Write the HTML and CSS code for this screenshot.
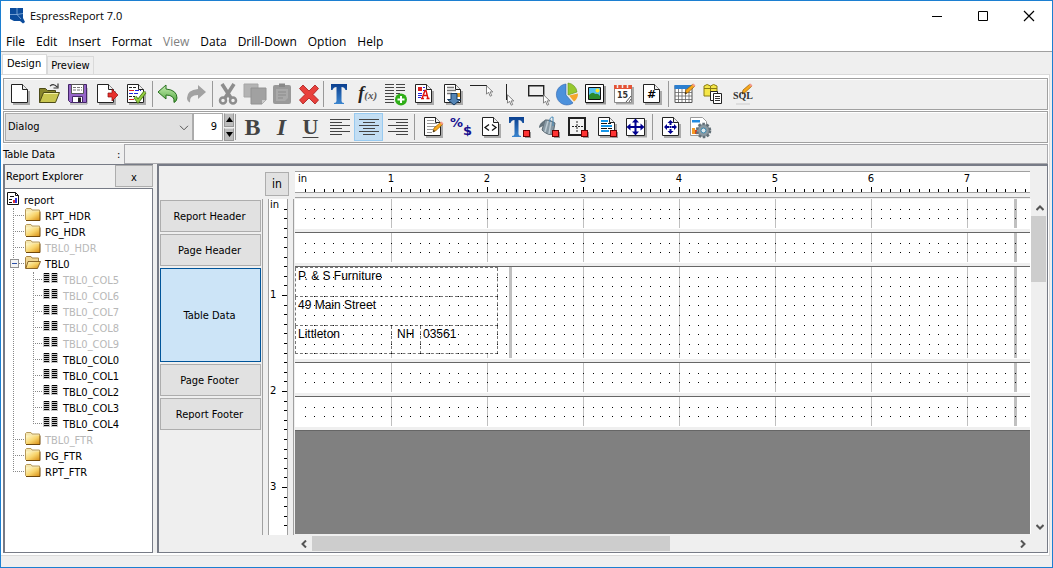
FILE: index.html
```html
<!DOCTYPE html>
<html lang="en">
<head>
<meta charset="utf-8">
<title>EspressReport 7.0</title>
<link rel="stylesheet" href="styles.css">
</head>
<body>
<svg class="defs" width="0" height="0" aria-hidden="true">
  <defs>
    <pattern id="dots" x="1" y="1" width="96" height="96" patternUnits="userSpaceOnUse">
      <g id="dot-rows" stroke="#000" stroke-width="1">
        <g id="dot-row"><path d="M9 9.500h1m8 0h1m9 0h1m8 0h1m9 0h1m9 0h1m8 0h1m9 0h1m8 0h1m9 0h1"/></g>
        <use href="#dot-row" y="9"/><use href="#dot-row" y="19"/><use href="#dot-row" y="28"/><use href="#dot-row" y="38"/><use href="#dot-row" y="48"/><use href="#dot-row" y="57"/><use href="#dot-row" y="67"/><use href="#dot-row" y="76"/>
      </g>
    </pattern>
    <pattern id="lines" x="1" width="96" height="96" patternUnits="userSpaceOnUse"><rect x="95" width="1" height="96" fill="#c0c0c0"/></pattern>
    <pattern id="hticks" x="1" width="96" height="20" patternUnits="userSpaceOnUse"><path d="M9.500 17v3m9-3v3m10-3v3m9-3v3m10-3v3m10-3v3m9-3v3m10-3v3m9-3v3m10-5v5" stroke="#000"/></pattern>
    <pattern id="vticks" y="1" width="20" height="96" patternUnits="userSpaceOnUse"><path d="M17 9.500h3m-3 9h3m-3 10h3m-3 9h3m-3 10h3m-3 10h3m-3 9h3m-3 10h3m-3 9h3m-5 10h5" stroke="#000"/></pattern>
    <linearGradient id="gold" x1="0" y1="0" x2="1" y2="1"><stop offset="0" stop-color="#fffbd0"/><stop offset=".5" stop-color="#f8d46c"/><stop offset="1" stop-color="#d58a10"/></linearGradient>
    <linearGradient id="blue" x2="0" y2="1"><stop offset="0" stop-color="#0a3f8f"/><stop offset="1" stop-color="#3c86cf"/></linearGradient>
    <linearGradient id="green" x2="0" y2="1"><stop offset="0" stop-color="#c9efb4"/><stop offset="1" stop-color="#4da63b"/></linearGradient>
    <symbol id="page" viewBox="0 0 24 24"><path d="M5 22h16V9" fill="none" stroke="#aaa" stroke-width="2"/><path d="M3.500 2.500h11l5 5v13h-16z" fill="#fff" stroke="#222"/><path d="M14.500 2.500v5h5" fill="#eee" stroke="#222"/></symbol>
    <symbol id="cursor" viewBox="0 0 9 12"><path d="M1.500.8v8.400l2-2 1.700 4 1.500-.7-1.600-3.600h2.700z" fill="#fff" stroke="#666" stroke-width=".8"/></symbol>
    <symbol id="red" viewBox="0 0 8 8"><rect x="2" y="2" width="6" height="6" fill="#999"/><rect x=".5" y=".5" width="6" height="6" fill="#f33" stroke="#600"/></symbol>
    <symbol id="pencil" viewBox="0 0 12 12"><path d="M1 11l1-4 7-6 2 2-7 6.500z" fill="#f7a81c" stroke="#985d00" stroke-width=".7"/><path d="M8 1.700l1.500-1.200 2 2L10 4z" fill="#f39a8c"/><path d="M1 11l.6-2.200 1.500 1.500z" fill="#222"/></symbol>
    <symbol id="folder" viewBox="0 0 16 14"><path d="M.5 11.500v-10l1-1h4.500l1 1.500h7.500v9.500z" fill="#f5e6ae" stroke="#b79a5b"/><path d="M1 3.500h14v9H1z" fill="url(#gold)"/><path d="M1 12.500h14v-9" fill="none" stroke="#70480c"/></symbol>
    <symbol id="folder-open" viewBox="0 0 16 14"><path d="M.5 12.500v-11l1-1h4.500l1 1.500h6.500v4" fill="#f0d690" stroke="#a78445"/><path d="M3 5.500h12.500l-3 7H.8z" fill="url(#gold)" stroke="#70480c" stroke-width=".8"/></symbol>
    <symbol id="column" viewBox="0 0 15 12"><path d="M0 1h7v10H0zM8 1h7v10H8z" fill="#c4c4c4"/><path d="M1 1.500h5m3 0h5M1 3.500h5m3 0h5M1 5.500h5m3 0h5M1 7.500h5m3 0h5M1 9.500h5m3 0h5" stroke="#000"/></symbol>
  </defs>
</svg>

<div class="window">
  <header class="titlebar">
    <svg class="logo" viewBox="0 0 16 16" width="16" height="16" aria-hidden="true"><path d="M1 0h13v10l2 4-2 1.500-3-2.500H5l-4-2z" fill="#0b4c9c"/><path d="M1 6.500h7V0m0 6.500l4 4.500m-4-4.500l6-1" fill="none" stroke="#8db4df" stroke-width=".8"/></svg>
    <h1 class="title">EspressReport 7.0</h1>
    <div class="window-controls">
      <button aria-label="Minimize"><svg width="12" height="12"><path d="M1 6.500h10" stroke="#000"/></svg></button>
      <button aria-label="Maximize"><svg width="12" height="12"><path d="M1.500 1.500h9v9h-9z" fill="none" stroke="#000"/></svg></button>
      <button aria-label="Close"><svg width="12" height="12"><path d="M1 1l10 10m0-10L1 11" stroke="#000" stroke-width="1.200"/></svg></button>
    </div>
  </header>
  <nav class="menubar" aria-label="Main">
    <button>File</button><button>Edit</button><button>Insert</button><button>Format</button><button disabled>View</button><button>Data</button><button>Drill-Down</button><button>Option</button><button>Help</button>
  </nav>
  <div class="tabs" role="tablist">
    <button class="tab tab-active" role="tab" aria-selected="true">Design</button>
    <button class="tab" role="tab" aria-selected="false">Preview</button>
  </div>

  <main class="pane">
    <div class="toolbar" role="toolbar" aria-label="Standard">
      <div class="group g-file">
        <button aria-label="New"><svg viewBox="0 0 24 24"><use href="#page" x="-1" width="24" height="24"/></svg></button>
        <button aria-label="Open"><svg viewBox="0 0 24 24"><path d="M1.500 20.500v-14h6l2 2h8v4" fill="#87852a" stroke="#4d4b18"/><path d="M1.500 20.500l4-10h16l-4 10z" fill="#c9c64f" stroke="#4d4b18"/><path d="M6 11.500h14" stroke="#f2f0a2"/><path d="M12 4q4-3 7 1m1-3.500v4.500h-4.500" fill="none" stroke="#333" stroke-width="1.200"/></svg></button>
        <button aria-label="Save"><svg viewBox="0 0 24 24"><path d="M3 22h17V6" fill="none" stroke="#999"/><path d="M1.500 2.500h18v18h-16l-2-2z" fill="#9666c8" stroke="#432567"/><path d="M4.500 2.500h12v9h-12z" fill="#fff" stroke="#555"/><path d="M6 5.500h9M6 8h9" stroke="#777" stroke-dasharray="3 1"/><path d="M5.500 14.500h10v6h-10z" fill="#fff" stroke="#432567"/><path d="M11 15.500h3V20h-3z" fill="#222"/></svg></button>
        <button aria-label="Export"><svg viewBox="0 0 24 24"><use href="#page" x="-2" width="24" height="24"/><path d="M12 11h4V7l6 6-6 6v-4h-4z" fill="#e8302c" stroke="#8a1010" stroke-width=".7"/></svg></button>
        <button aria-label="Validate"><svg viewBox="0 0 24 24"><use href="#page" x="-1" width="24" height="24"/><path d="M4 5.500h8m-8 9h6" stroke="#222" stroke-dasharray="3 1"/><path d="M4 8.500h5m-5 9h5" stroke="#d22"/><path d="M10 8.500h6M4 11.500h9" stroke="#22d" stroke-dasharray="4 1"/><path d="M10 15l3 4 7-9" fill="none" stroke="#4d7d15" stroke-width="3.600"/><path d="M10 15l3 4 7-9" fill="none" stroke="#96ce45" stroke-width="2"/></svg></button>
      </div><span class="sep"></span>
      <div class="group g-undo">
        <button aria-label="Undo"><svg viewBox="0 0 24 24"><path d="M2 10l8-7v4q11 1 11 9 0 3-3 4.500 1-7.500-8-7.500v4z" fill="url(#green)" stroke="#28701f"/></svg></button>
        <button disabled aria-label="Redo"><svg viewBox="0 0 24 24"><path d="M21 10l-8-7v4Q2 8 2 16q0 3 3 4.500Q4 13 13 13v4z" fill="#a2a2a2"/></svg></button>
      </div><span class="sep"></span>
      <div class="group g-edit">
        <button disabled aria-label="Cut"><svg viewBox="0 0 24 24"><path d="M6 2l9 14M18 2L9 16" stroke="#8d8d8d" stroke-width="3.600"/><circle cx="7" cy="18.500" r="3" fill="none" stroke="#8d8d8d" stroke-width="2.500"/><circle cx="17" cy="18.500" r="3" fill="none" stroke="#8d8d8d" stroke-width="2.500"/></svg></button>
        <button disabled aria-label="Copy"><svg viewBox="0 0 24 24"><path d="M1 2h14v13H1z" fill="#b3b3b3" stroke="#a6a6a6"/><path d="M8 6h15v12l-4 4H8z" fill="#a1a1a1" stroke="#929292"/><path d="M19 22v-4h4" fill="#ccc"/></svg></button>
        <button disabled aria-label="Paste"><svg viewBox="0 0 24 24"><rect x="3" y="3" width="18" height="19" rx="2" fill="#999"/><path d="M9 1.500h6V5H9z" fill="#888"/><path d="M6 7h12v9l-3 3H6z" fill="#a9a9a9"/><path d="M8 10h8m-8 3h8m-8 3h5" stroke="#8b8b8b"/></svg></button>
        <button aria-label="Delete"><svg viewBox="0 0 24 24"><path d="M6 3l6 6 6-6 3.500 3.500L16 12.500l5.500 5.500-3.500 4-6-6-6 6-3.500-4 5.500-5.500-5.500-6z" fill="#e8403c" stroke="#a71b19" stroke-width=".8"/></svg></button>
      </div><span class="sep"></span>
      <div class="group g-insert">
        <button aria-label="Insert label"><svg viewBox="0 0 24 24"><path d="M4 2h16v6h-1.500q-1-3-4-3v14q0 2 2.500 2v1H7v-1q2.500 0 2.500-2V5q-3 0-4 3H4z" fill="url(#blue)"/></svg></button>
        <button aria-label="Insert formula"><span class="fx">f<small>(x)</small></span></button>
        <button aria-label="Insert column field"><svg viewBox="0 0 24 24"><path d="M1 2.500h9m2 0h9M1 5.500h9m2 0h9M1 8.500h9m2 0h9M1 11.500h9m2 0h4M1 14.500h9M1 17.500h9M1 20.500h9" stroke="#444"/><circle cx="17" cy="17.500" r="6" fill="#2fae18"/><path d="M17 14v7m-3.500-3.500h7" stroke="#fff" stroke-width="2"/></svg></button>
        <button aria-label="Insert rich text"><svg viewBox="0 0 24 24"><use href="#page" width="24" height="24" x="-1"/><path d="M5 5h4v4H5z" fill="#d22"/><path d="M10 5.500h2M10 8.500h2M5 11.500h4m-4 2h4m-4 2h3" stroke="#22d"/><path d="M9 16.500l3-8h1l2 8m-5-3h4M8 16.500h3m2.500 0h3" fill="none" stroke="#d11" stroke-width="1.400"/></svg></button>
        <button aria-label="Insert subreport"><svg viewBox="0 0 24 24"><use href="#page" width="24" height="24"/><path d="M6 5.500h7M6 8.500h9M6 11.500h5" stroke="#777" stroke-width="1.500"/><path d="M16 11h3v4h-3z" fill="#e8a024"/><path d="M10 11.500h6v6h3.500L13 23l-6.500-5.500H10z" fill="#5585b5" stroke="#163a61"/></svg></button>
        <button aria-label="Line"><svg viewBox="0 0 24 24"><path d="M0 3.500h17" stroke="#222"/><use href="#cursor" x="15" y="3" width="9" height="12"/></svg></button>
        <button aria-label="Vertical line"><svg viewBox="0 0 24 24"><path d="M8.500 2v16" stroke="#222"/><use href="#cursor" x="8" y="12" width="9" height="12"/></svg></button>
        <button aria-label="Rectangle"><svg viewBox="0 0 24 24"><path d="M1.700 3.700h15v10h-15z" fill="none" stroke="#222" stroke-width="1.400"/><use href="#cursor" x="15" y="12" width="9" height="12"/></svg></button>
        <button aria-label="Chart"><svg viewBox="0 0 24 24"><path d="M11 3v10l7 8A10.500 10.500 0 1 1 11 2z" fill="#4c91dc" stroke="#2b62ad" stroke-width=".6"/><path d="M13 1a10 10 0 0 1 9 9l-9 3z" fill="#96c82e" stroke="#5f901a" stroke-width=".6"/><path d="M14 13.500l9-2q0 5-4 8z" fill="#f5a62c"/></svg></button>
        <button aria-label="Image"><svg viewBox="0 0 24 24"><path d="M2 21.500h19V4" fill="none" stroke="#999" stroke-width="2"/><path d="M1.500 2.500h18v18h-18z" fill="#fff" stroke="#111"/><path d="M4.500 5.500h12v12h-12z" fill="#57c4f3" stroke="#111"/><path d="M5 13q4-4 6-1 3-1 5 2v3H5z" fill="#2b8c2e"/><circle cx="13.500" cy="8.500" r="2" fill="#ffea28"/></svg></button>
        <button aria-label="Date"><svg viewBox="0 0 24 24"><path d="M4 21.500h17V5" fill="none" stroke="#aaa" stroke-width="2"/><path d="M2.500 3.500h17v17h-17z" fill="#fff" stroke="#888"/><path d="M2 3h18v4H2z" fill="#e45336"/><path d="M5.500 1v5m5-5v5m5-5v5" stroke="#eee" stroke-width="1.500"/><text class="i-date" x="5" y="16">15</text><path d="M19 14l-5 6m5-3l-2 3" stroke="#555"/></svg></button>
        <button aria-label="Page number"><svg viewBox="0 0 24 24"><use href="#page" width="24" height="24" x="-1"/><text class="i-hash" x="6" y="16">#</text></svg></button>
      </div><span class="sep"></span>
      <div class="group g-data">
        <button aria-label="Edit query result"><svg viewBox="0 0 24 24"><path d="M2 3.500h17v17H2z" fill="#fff" stroke="#555"/><path d="M1.500 3h18v4h-18z" fill="#2b7fd0"/><path d="M2 10.500h17m-17 3.500h17m-17 3.500h17M5.500 7v13M9 7v13m3.500-13v13M16 7v13" stroke="#666" stroke-width=".8"/><use href="#pencil" x="11" y="1" width="12" height="12"/></svg></button>
        <button aria-label="Data source"><svg viewBox="0 0 24 24"><path d="M2 4q3-3 6.500 0 3-3 6.500 0v10H2z" fill="#f5e648" stroke="#8a7c13"/><path d="M8.500 4v10M2 6.500h13" stroke="#8a7c13"/><path d="M8.500 9.500h7v9h-7z" fill="#fff" stroke="#222"/><path d="M11.500 11.500h8v10h-8z" fill="#fff" stroke="#222"/><path d="M13 14.500h5m-5 2h5m-5 2h5" stroke="#333"/></svg></button>
        <button aria-label="SQL"><svg viewBox="0 0 24 24"><text class="i-sql" x="2" y="17">SQL</text><use href="#pencil" x="10" y="1" width="12" height="12"/><path d="M5 22h14" stroke="#ddd" stroke-width="2"/></svg></button>
      </div>
    </div>

    <div class="toolbar" role="toolbar" aria-label="Formatting">
      <div class="combo">
        <select aria-label="Font"><option>Dialog</option></select>
        <svg width="10" height="6" aria-hidden="true"><path d="M1 .8l4 4 4-4" fill="none" stroke="#555"/></svg>
      </div>
      <div class="spinner">
        <input type="text" value="9" aria-label="Font size">
        <div class="spin-buttons"><button aria-label="Increase size"><svg width="7" height="5"><path d="M3.500 0L7 5H0z"/></svg></button><button aria-label="Decrease size"><svg width="7" height="5"><path d="M0 0h7L3.500 5z"/></svg></button></div>
      </div>
      <span class="sep sep-first"></span>
      <div class="group wide">
        <button class="letter bold" aria-label="Bold">B</button>
        <button class="letter italic" aria-label="Italic">I</button>
        <button class="letter underline" aria-label="Underline">U</button>
        <button aria-label="Align left"><svg viewBox="0 0 24 24"><path d="M2 4.500h20M2 7.500h12M2 10.500h20M2 13.500h12M2 16.500h20M2 19.500h12" stroke="#444"/></svg></button>
        <button class="pressed" aria-label="Align center" aria-pressed="true"><svg viewBox="0 0 24 24"><path d="M2 4.500h20M6 7.500h12M2 10.500h20M6 13.500h12M2 16.500h20M6 19.500h12" stroke="#444"/></svg></button>
        <button aria-label="Align right"><svg viewBox="0 0 24 24"><path d="M2 4.500h20M10 7.500h12M2 10.500h20M10 13.500h12M2 16.500h20M10 19.500h12" stroke="#444"/></svg></button>
      </div><span class="sep sep-wide"></span>
      <div class="group wide">
        <button aria-label="Script"><svg viewBox="0 0 24 24"><use href="#page" width="24" height="24"/><path d="M6 5.500h7M6 8.500h10M6 11.500h9M6 14.500h6M6 17.500h5" stroke="#999"/><use href="#pencil" x="11" y="6" width="12" height="12"/></svg></button>
        <button aria-label="Data format"><svg viewBox="0 0 24 24"><text class="i-num" x="0" y="12">%</text><text class="i-num" x="13" y="20">$</text></svg></button>
        <button aria-label="HTML tag"><svg viewBox="0 0 24 24"><use href="#page" width="24" height="24"/><path d="M10 9.500l-4 3 4 3m3-6l4 3-4 3" fill="none" stroke="#111" stroke-width="1.300"/></svg></button>
        <button aria-label="Font color"><svg viewBox="0 0 24 24"><path d="M1 2h15v6h-1.500q-1-3-4-3v14q0 2 2.500 2v1H4v-1q2.500 0 2.500-2V5q-3 0-4 3H1z" fill="url(#blue)"/><use href="#red" x="15" y="15" width="8" height="8"/></svg></button>
        <button aria-label="Background color"><svg viewBox="0 0 24 24"><path d="M8 5q4-1 10 3l-2 11q-5 2-11-4z" fill="#8798a3" stroke="#5a6872"/><path d="M11 6L8 17m6-10l-2 12" stroke="#bccad2" stroke-width="1.500"/><path d="M8 5Q2 8 2 13l4-2z" fill="#65737c"/><path d="M13 7q-1-5 3-5v9" fill="none" stroke="#4387b5"/><use href="#red" x="15" y="15" width="8" height="8"/></svg></button>
        <button aria-label="Border"><svg viewBox="0 0 24 24"><path d="M3 3h16v17H3z" fill="#f4f4f4" stroke="#222" stroke-width="2"/><path d="M11 6v11M6 11.500h11" stroke="#222" stroke-dasharray="2 1"/><use href="#red" x="15" y="15" width="8" height="8"/></svg></button>
        <button aria-label="Alternate row color"><svg viewBox="0 0 24 24"><use href="#page" width="24" height="24"/><path d="M6 6h7m-7 5h11m-11 5h8" stroke="#1595e8" stroke-width="2"/><path d="M6 8.500h10m-10 5h11" stroke="#111" stroke-dasharray="6 1 4 1"/><use href="#red" x="15" y="15" width="8" height="8"/></svg></button>
        <button aria-label="Size"><svg viewBox="0 0 24 24"><path d="M4 21.500h18V5" fill="none" stroke="#aaa" stroke-width="2"/><path d="M2.500 3.500h18v17h-18z" fill="#fff" stroke="#222"/><path d="M11.500 3.500l3.500 4h-2.500v3.500h4V8.500l4 3.500-4 3.500V13h-4v3.500H15l-3.500 4-3.500-4h2.500V13h-4v2.500l-4-3.500 4-3.500V11h4V7.500H8z" fill="#00008f"/></svg></button>
      </div><span class="sep sep-wide"></span>
      <div class="group wide">
        <button aria-label="Page setup"><svg viewBox="0 0 24 24"><use href="#page" width="24" height="24"/><path d="M11.500 5l3 3h-2v2h-2V8h-2zm0 14l3-3h-2v-2h-2v2h-2zM5 12l3-3v2h2v2H8v2zm13 0l-3-3v2h-2v2h2v2zM10.500 11h2v2h-2z" fill="#00008f"/></svg></button>
        <button aria-label="Report options"><svg viewBox="0 0 24 24"><path d="M2.500 2.500h12l4 4v14h-16z" fill="#fff" stroke="#999"/><path d="M4 5h8v2.500H4z" fill="#238be0"/><path d="M4 13h3v6H4z" fill="#f59b22"/><path d="M7 15h2v4H7z" fill="#d44424"/><circle cx="15.500" cy="15.500" r="6.500" fill="#86959e" stroke="#637078" stroke-width="2.600" stroke-dasharray="2.500 1.600"/><circle cx="15.500" cy="15.500" r="5" fill="#8c9aa2"/><circle cx="15.500" cy="15.500" r="2.500" fill="#dce8ee" stroke="#3786ad"/></svg></button>
      </div>
    </div>

    <div class="infobar"><label for="cell-value">Table Data</label><span>:</span><input id="cell-value" type="text" readonly></div>

    <div class="workspace">
      <aside class="explorer">
        <div class="explorer-head"><h2>Report Explorer</h2><button aria-label="Close explorer">x</button></div>
        <div class="tree">
          <div class="node root"><svg viewBox="0 0 13 14" aria-hidden="true"><path d="M.5.5h8l3 3v9H.5z" fill="#fff" stroke="#111"/><path d="M8.500.5v3h3M3 4.500h4M2 7.500h3M2 10.500h3" fill="none" stroke="#111"/><path d="M6 8h2v3H6z" fill="#d33"/><path d="M8 6h2v5H8z" fill="#33d"/></svg>report</div>
          <ul class="branch">
            <li><div class="node"><svg><use href="#folder"/></svg>RPT_HDR</div></li>
            <li><div class="node"><svg><use href="#folder"/></svg>PG_HDR</div></li>
            <li><div class="node off"><svg><use href="#folder"/></svg>TBL0_HDR</div></li>
            <li>
              <div class="node"><button class="expander" aria-label="Collapse TBL0"><svg width="9" height="9"><rect x=".5" y=".5" width="8" height="8" fill="#f4f4f4" stroke="#919191"/><path d="M2 4.500h5" stroke="#2b50a8"/></svg></button><svg><use href="#folder-open"/></svg>TBL0</div>
              <ul class="branch leaf">
                <li><div class="node off"><svg><use href="#column"/></svg>TBL0_COL5</div></li>
                <li><div class="node off"><svg><use href="#column"/></svg>TBL0_COL6</div></li>
                <li><div class="node off"><svg><use href="#column"/></svg>TBL0_COL7</div></li>
                <li><div class="node off"><svg><use href="#column"/></svg>TBL0_COL8</div></li>
                <li><div class="node off"><svg><use href="#column"/></svg>TBL0_COL9</div></li>
                <li><div class="node"><svg><use href="#column"/></svg>TBL0_COL0</div></li>
                <li><div class="node"><svg><use href="#column"/></svg>TBL0_COL1</div></li>
                <li><div class="node"><svg><use href="#column"/></svg>TBL0_COL2</div></li>
                <li><div class="node"><svg><use href="#column"/></svg>TBL0_COL3</div></li>
                <li><div class="node"><svg><use href="#column"/></svg>TBL0_COL4</div></li>
              </ul>
            </li>
            <li><div class="node off"><svg><use href="#folder"/></svg>TBL0_FTR</div></li>
            <li><div class="node"><svg><use href="#folder"/></svg>PG_FTR</div></li>
            <li><div class="node"><svg><use href="#folder"/></svg>RPT_FTR</div></li>
          </ul>
        </div>
      </aside>

      <section class="designer" aria-label="Report designer">
        <div class="corner"><button>in</button></div>
        <div class="hruler">
          <div class="hscale">
            <svg aria-hidden="true"><rect x="1" width="100%" height="20" fill="url(#hticks)"/></svg>
            <span class="unit">in</span><span>1</span><span>2</span><span>3</span><span>4</span><span>5</span><span>6</span><span>7</span>
          </div>
        </div>
        <div class="vruler">
          <div class="vscale">
            <svg aria-hidden="true"><rect y="1" width="20" height="100%" fill="url(#vticks)"/></svg>
            <span class="unit">in</span><span>1</span><span>2</span><span>3</span>
          </div>
        </div>
        <div class="sections">
          <button>Report Header</button>
          <button>Page Header</button>
          <button class="tall selected">Table Data</button>
          <button>Page Footer</button>
          <button>Report Footer</button>
        </div>
        <div class="canvas">
          <div class="band"><svg aria-hidden="true"><rect x="1" width="100%" height="100%" fill="url(#lines)"/><rect x="719" width="3" height="100%" fill="#c0c0c0"/><rect x="1" y="1" width="100%" height="100%" fill="url(#dots)"/></svg></div>
          <div class="band"><svg aria-hidden="true"><rect x="1" width="100%" height="100%" fill="url(#lines)"/><rect x="719" width="3" height="100%" fill="#c0c0c0"/><rect x="1" y="1" width="100%" height="100%" fill="url(#dots)"/></svg></div>
          <div class="band band-tall">
            <svg aria-hidden="true"><rect x="1" width="100%" height="100%" fill="url(#lines)"/><rect x="719" width="3" height="100%" fill="#c0c0c0"/><rect x="214" width="3" height="100%" fill="#c0c0c0"/></svg>
            <div class="cells">
              <div class="cell">P. &amp; S Furniture</div>
              <div class="cell">49 Main Street</div>
              <div class="cell-row"><div class="cell city">Littleton</div><div class="cell state">NH</div><div class="cell zip">03561</div></div>
            </div>
            <svg aria-hidden="true"><rect x="1" y="1" width="100%" height="100%" fill="url(#dots)"/></svg>
          </div>
          <div class="band"><svg aria-hidden="true"><rect x="1" width="100%" height="100%" fill="url(#lines)"/><rect x="719" width="3" height="100%" fill="#c0c0c0"/><rect x="1" y="1" width="100%" height="100%" fill="url(#dots)"/></svg></div>
          <div class="band"><svg aria-hidden="true"><rect x="1" width="100%" height="100%" fill="url(#lines)"/><rect x="719" width="3" height="100%" fill="#c0c0c0"/><rect x="1" y="1" width="100%" height="100%" fill="url(#dots)"/></svg></div>
        </div>
        <div class="scroll vscroll">
          <button aria-label="Scroll up"><svg width="8" height="8"><path d="M.5 6L4 2.500 7.500 6" /></svg></button>
          <div class="track"><div class="thumb"></div></div>
          <button aria-label="Scroll down"><svg width="8" height="8"><path d="M.5 2L4 5.500 7.500 2"/></svg></button>
        </div>
        <div class="scroll hscroll">
          <button aria-label="Scroll left"><svg width="8" height="8"><path d="M6 .5L2.500 4 6 7.500"/></svg></button>
          <div class="track"><div class="thumb"></div></div>
          <button aria-label="Scroll right"><svg width="8" height="8"><path d="M2 .5L5.500 4 2 7.500"/></svg></button>
        </div>
      </section>
    </div>
  </main>
  <footer class="statusbar"></footer>
</div>
</body>
</html>
```
FILE: styles.css
```css
* { box-sizing: border-box; }

html, body { height: 100%; }

body {
  margin: 0;
  font: 11px/16px "DejaVu Sans Condensed", "DejaVu Sans", sans-serif;
  color: #000;
  background: #efefef;
}

button {
  font: inherit;
  color: inherit;
  padding: 0;
  border: 0;
  background: none;
  white-space: nowrap;
}

h1, h2, ul { margin: 0; padding: 0; font: inherit; list-style: none; }
svg { display: block; flex: none; }
.defs { position: absolute; }

.window {
  display: flex;
  flex-direction: column;
  min-height: 100%;
  border: 1px solid #1c7fd1;
}

/* Title bar and menus */
.titlebar {
  display: flex;
  align-items: center;
  height: 29px;
  padding-left: 8px;
  background: #fff;
}
.title { flex: 1; padding-left: 5px; font: 11px/16px "Open Sans", sans-serif; }
.window-controls { display: flex; }
.window-controls button { display: grid; place-items: center; width: 46px; height: 28px; }

.menubar {
  display: flex;
  gap: 11px;
  height: 22px;
  padding: 2px 5px 0;
  background: #fff;
  border-bottom: 1px solid #a0a0a0;
  font: 12px/19px "Open Sans", sans-serif;
}
.menubar button:disabled { color: #808080; }

.tabs { display: flex; align-items: flex-end; height: 22px; padding-left: 1px; }
.tab {
  height: 18px;
  padding: 0 3px;
  border: 1px solid #dadada;
  border-bottom: 0;
}
.tab-active { height: 20px; padding: 0 5px 2px 4px; background: #fff; }

.pane {
  display: flex;
  flex: 1;
  flex-direction: column;
  margin-right: 2px;
  padding: 3px 1px 2px 2px;
  background: #fff;
  border: solid #dadada;
  border-width: 1px 1px 1px 0;
}
.statusbar { height: 11px; }

/* Toolbars */
.toolbar {
  display: flex;
  align-items: center;
  height: 32px;
  margin-bottom: 1px;
  padding-left: 2px;
  background: #efefef;
  border: 1px solid #a0a0a0;
  box-shadow: inset 0 1px #fff;
}
.group { display: grid; grid-auto-flow: column; grid-auto-columns: 1fr; }
.group button { display: grid; place-items: center; height: 28px; }
.group svg { width: 24px; height: 24px; }
.g-file { width: 145px; }
.g-undo { width: 57px; }
.g-edit { width: 108px; }
.g-insert { width: 342px; }
.g-data { width: 87px; }
.wide { grid-auto-columns: 29px; }
.sep { width: 1px; height: 26px; margin: 0 1px; background: #999; }
.sep-first { margin: 0 2px 0 1px; }
.sep-wide { margin: 0 3px 0 2px; }

.fx { font: italic bold 18px/24px "Liberation Serif", serif; color: #222; }
.fx small { font-size: 11px; color: #555; }
.i-date { font: bold 8px "DejaVu Sans", sans-serif; fill: #333; }
.i-hash { font: bold 11px "DejaVu Sans", sans-serif; }
.i-sql { font: bold 10px "Liberation Serif", serif; fill: #333; }
.i-num { font: bold 13px "DejaVu Sans", sans-serif; fill: #17128f; }

.group .letter { font: bold 24px/28px "Liberation Serif", serif; color: #444; }
.group .italic { font-style: italic; }
.group .underline { font-size: 22px; text-decoration: underline; text-decoration-thickness: 1px; text-underline-offset: 3px; }
.group .pressed { background: #c3def3; border: 1px solid #98caf0; }

.combo { position: relative; width: 188px; height: 28px; margin-left: -1px; }
.combo select {
  width: 100%;
  height: 100%;
  padding: 0 2px;
  appearance: none;
  font: inherit;
  background: #e0e0e0;
  border: 1px solid #adadad;
  border-radius: 0;
}
.combo svg { position: absolute; right: 4px; top: 12px; }
.spinner { display: flex; gap: 1px; height: 28px; }
.spinner input {
  width: 30px;
  padding: 0 5px;
  border: 1px solid #aaa;
  font: inherit;
  text-align: right;
}
.spin-buttons { display: grid; grid-template-rows: 1fr 1fr; gap: 1px; width: 10px; }
.spin-buttons button { display: grid; place-items: center; background: #bdbdbd; border: 1px solid #999; border-top-color: #ddd; }

.infobar { display: flex; height: 20px; background: #efefef; line-height: 21px; }
.infobar label { width: 114px; }
.infobar input {
  flex: 1;
  min-width: 0;
  margin-left: 4px;
  background: #efefef;
  border: 1px solid #a9a9ad;
}

/* Workspace */
.workspace { display: flex; flex: 1; gap: 4px; background: #efefef; }
.explorer {
  display: flex;
  flex-direction: column;
  width: 150px;
  border-left: 2px solid #777b86;
  border-top: 1px solid #777b86;
}
.explorer-head { display: flex; height: 23px; line-height: 23px; }
.explorer-head h2 { flex: 1; padding-left: 1px; }
.explorer-head button { width: 38px; height: 22px; background: #e1e1e1; border: 1px solid #adadad; }
.tree { flex: 1; padding: 3px 0 0 2px; background: #fff; border: solid #777b86; border-width: 1px 1px 1px 0; }
.node { display: flex; gap: 4px; height: 16px; padding-left: 17px; position: relative; line-height: 17px; }
.node > svg { width: 16px; height: 14px; }
.root { padding-left: 0; }
.root > svg { width: 13px; }
.off { color: #b8b8b8; }
.branch { padding-left: 1px; position: relative; }
.branch::before {
  content: "";
  position: absolute;
  left: 6px;
  top: 0;
  bottom: 8px;
  border-left: 1px dotted #888;
}
.branch .node::before {
  content: "";
  position: absolute;
  left: 7px;
  top: 7px;
  width: 9px;
  border-top: 1px dotted #888;
}
.leaf { padding-left: 18px; }
.leaf::before { left: 25px; }
.leaf .node > svg { width: 15px; height: 12px; }
.leaf .node { gap: 5px; }
.expander { position: absolute; left: 2px; top: 3px; }

.designer {
  display: grid;
  flex: 1;
  grid-template-columns: 103px 33px minmax(0, 1fr) 16px;
  grid-template-rows: 33px minmax(0, 1fr) 17px;
  border: solid #777b86;
  border-width: 2px 1px 1px 2px;
}
.corner { grid-area: 1 / 1 / 2 / 3; display: flex; justify-content: flex-end; padding: 6px 6px 3px 0; }
.corner button { width: 24px; background: #e1e1e1; border: 1px solid #adadad; font-size: 12px; }

.hruler { grid-area: 1 / 3; padding: 5px 0; border-bottom: 1px solid #a0a0a0; margin: 0 1px 1px 0; }
.hscale {
  position: relative;
  display: flex;
  height: 22px;
  overflow: hidden;
  background: #fff;
  border: solid #a0a0a0;
  border-width: 1px 0;
  font: 10px/13px "DejaVu Sans", sans-serif;
}
.hscale svg { position: absolute; width: 100%; height: 20px; }
.hscale span { flex: none; width: 96px; text-align: center; }
.hscale .unit { width: 48px; padding-left: 3px; text-align: left; }

.vruler { grid-area: 2 / 2; padding: 0 5px; margin-right: 1px; border: solid #a0a0a0; border-width: 0 1px; }
.vscale {
  position: relative;
  height: 100%;
  overflow: hidden;
  background: #fff;
  border: solid #a0a0a0;
  border-width: 0 1px;
  font: 10px/12px "DejaVu Sans", sans-serif;
}
.vscale svg { position: absolute; right: 0; width: 20px; height: 100%; }
.vscale span { display: block; height: 96px; padding: 42px 0 0 1px; }
.vscale .unit { height: 48px; padding: 0 1px; }

.sections { grid-area: 2 / 1; display: flex; flex-direction: column; gap: 2px; padding: 1px 1px 0; }
.sections button { height: 32px; padding: 1px 2px 0 0; background: #e1e1e1; border: 1px solid #adadad; }
.sections .tall { height: 94px; }
.sections .selected { background: #cce4f7; border-color: #005499; }

.canvas { grid-area: 2 / 3; margin: 0 0 1px; overflow: hidden; background: #808080; border-right: 1px solid #fff; }
.band {
  position: relative;
  height: 34px;
  background: #fff;
  border-bottom: 1px solid #666;
  box-shadow: inset 0 -3px #efefef;
}
.band > svg { position: absolute; top: 0; left: 0; width: 100%; height: 29px; }
.band-tall { height: 96px; }
.band-tall > svg { height: 91px; }
.cells { position: absolute; width: 203px; font: 12px/17px "Liberation Sans", sans-serif; border-top: 1px dashed #777; }
.cell { height: 29px; padding-left: 2px; background: #fff; border: 1px dashed #777; border-width: 0 1px 1px; }
.cell-row { display: flex; }
.cell-row .cell { height: 28px; }
.city { width: 97px; }
.cell-row .state { width: 29px; border-left: 0; padding-left: 5px; }
.zip { flex: 1; border-left: 0; }

.scroll { display: flex; background: #efefef; }
.scroll button { display: grid; place-items: center; flex: none; width: 17px; height: 17px; }
.scroll path { fill: none; stroke: #555; stroke-width: 2; }
.track { flex: 1; min-width: 0; min-height: 0; }
.thumb { background: #cdcdcd; }
.vscroll { grid-area: 2 / 4; flex-direction: column; }
.vscroll .thumb { width: 15px; height: 22%; }
.hscroll { grid-area: 3 / 3; }
.hscroll .thumb { width: 51%; height: 15px; margin-top: 1px; }
```
